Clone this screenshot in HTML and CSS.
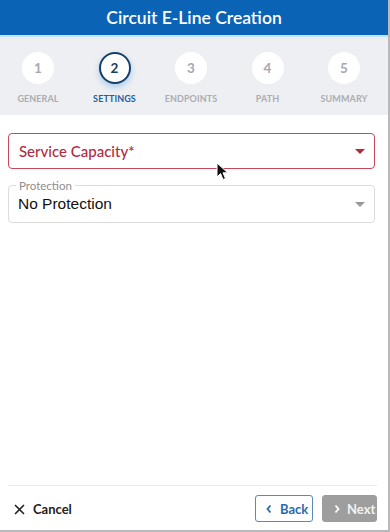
FILE: index.html
```html
<!DOCTYPE html>
<html>
<head>
<meta charset="utf-8">
<link rel="stylesheet" href="styles.css">
</head>
<body>
<div class="app">
  <header class="title-bar">Circuit E-Line Creation</header>
  <nav class="stepper">
    <div class="step"><span class="circle">1</span><span class="label">General</span></div>
    <div class="step active"><span class="circle">2</span><span class="label">Settings</span></div>
    <div class="step"><span class="circle">3</span><span class="label">Endpoints</span></div>
    <div class="step"><span class="circle">4</span><span class="label">Path</span></div>
    <div class="step"><span class="circle">5</span><span class="label">Summary</span></div>
  </nav>
  <main class="content">
    <div class="select error">
      <span class="placeholder">Service Capacity*</span>
      <span class="caret red"></span>
    </div>
    <fieldset class="select outlined">
      <legend>Protection</legend>
      <span class="value">No Protection</span>
      <span class="caret"></span>
    </fieldset>
    <svg class="cursor" width="14" height="20" viewBox="0 0 14 20">
      <path d="M1 1 L1 15 L4.5 11.5 L7 17.5 L9.5 16.5 L7 10.8 L11.8 10.8 Z" fill="#111" stroke="#fff" stroke-width="1"/>
    </svg>
  </main>
  <footer class="footer">
    <button class="btn-cancel">
      <svg width="11" height="11" viewBox="0 0 11 11"><path d="M1 1 L10 10 M10 1 L1 10" stroke="#222" stroke-width="1.6"/></svg>
      Cancel
    </button>
    <div class="nav-buttons">
      <button class="btn btn-back">
        <svg width="6" height="10" viewBox="0 0 6 10"><path d="M4.5 1.5 L1.5 5 L4.5 8.5" fill="none" stroke="#2b6aa8" stroke-width="1.8"/></svg>
        <span>Back</span>
      </button>
      <button class="btn btn-next">
        <svg width="6" height="10" viewBox="0 0 6 10"><path d="M1.5 1.5 L4.5 5 L1.5 8.5" fill="none" stroke="#fff" stroke-width="1.8"/></svg>
        <span>Next</span>
      </button>
    </div>
  </footer>
</div>
</body>
</html>
```

FILE: styles.css
```css
* { box-sizing: border-box; }
html, body { margin: 0; padding: 0; }
body {
  width: 390px;
  height: 532px;
  font-family: Lato, "Open Sans", sans-serif;
  background: #fff;
}
.app {
  width: 390px;
  height: 532px;
  display: flex;
  flex-direction: column;
  border-right: 2px solid #b9b9bb;
  border-bottom: 2px solid #b9b9bb;
  overflow: hidden;
}
.title-bar {
  height: 37px;
  background: #0b63b6;
  color: #fff;
  font-size: 17.5px;
  font-weight: 600;
  display: flex;
  align-items: center;
  justify-content: center;
  border-bottom: 2px solid #bfe6f6;
}
.stepper {
  height: 78px;
  background: #eeeff2;
  display: grid;
  grid-template-columns: 76px 77px 76px 77px 76px;
  padding: 15px 0 0 0;
}
.step {
  display: flex;
  flex-direction: column;
  align-items: center;
  gap: 9px;
}
.circle {
  width: 32px;
  height: 32px;
  border-radius: 50%;
  background: #fff;
  color: #a6a8ae;
  font-size: 13.5px;
  font-weight: 700;
  display: flex;
  align-items: center;
  justify-content: center;
}
.label {
  font-size: 9px;
  font-weight: 700;
  text-transform: uppercase;
  color: #abadb3;
  letter-spacing: 0.1px;
}
.step.active .circle {
  border: 2px solid #163f69;
  color: #163f69;
  box-shadow: 0 3px 6px rgba(80, 160, 230, 0.45);
}
.step.active .label { color: #1e5f9e; }
.content {
  flex: 1;
  padding: 18px 13px 0 8px;
  display: flex;
  flex-direction: column;
  gap: 12px;
  position: relative;
}
.select {
  position: relative;
  display: flex;
  align-items: center;
  border-radius: 4px;
}
.select.error {
  height: 36px;
  border: 1px solid #c8475a;
  padding: 0 10px;
}
.placeholder {
  color: #b32a3e;
  font-size: 15px;
  font-weight: 500;
}
.caret {
  position: absolute;
  right: 9px;
  top: 50%;
  margin-top: -2px;
  width: 0;
  height: 0;
  border-left: 5px solid transparent;
  border-right: 5px solid transparent;
  border-top: 5px solid #9a9a9a;
}
.caret.red { border-top-color: #b32a3e; }
.select.outlined {
  margin: 0;
  height: 42px;
  border: 1px solid #dcdcdc;
  padding: 0 9px 0 9px;
  min-width: 0;
}
.select.outlined legend {
  font-size: 11.5px;
  color: #8d8d8d;
  padding: 0 3px;
  margin-left: -2px;
  font-family: Lato, sans-serif;
  line-height: 9px;
}
.select.outlined .caret { margin-top: 0; }
.value {
  font-family: "Liberation Sans", Arial, sans-serif;
  font-size: 15.5px;
  color: #111;
  margin-top: 5px;
}
.cursor {
  position: absolute;
  left: 216px;
  top: 47px;
}
.footer {
  margin: 0 11px 0 8px;
  border-top: 1px solid #ececec;
  height: 45px;
  display: flex;
  align-items: flex-start;
  justify-content: space-between;
  padding-top: 9px;
}
.btn-cancel {
  border: none;
  background: none;
  font-family: Lato, sans-serif;
  font-size: 13px;
  font-weight: 700;
  color: #222;
  display: flex;
  align-items: center;
  gap: 8px;
  padding: 6px 0 0 6px;
}
.nav-buttons {
  display: flex;
  gap: 9px;
}
.btn {
  height: 27px;
  border-radius: 3px;
  font-family: Lato, sans-serif;
  font-size: 13px;
  font-weight: 700;
  display: flex;
  align-items: center;
  gap: 8px;
  padding: 0 0 0 10px;
  white-space: nowrap;
  overflow: visible;
}
.btn svg { flex-shrink: 0; }
.btn-back {
  width: 58px;
  border: 1px solid #5a89b4;
  background: #fff;
  color: #2b6aa8;
}
.btn-next {
  width: 55px;
  border: 1px solid #9c9c9c;
  background: #9e9e9e;
  color: #f2f2f2;
  padding-left: 11px;
  gap: 7px;
}
```
